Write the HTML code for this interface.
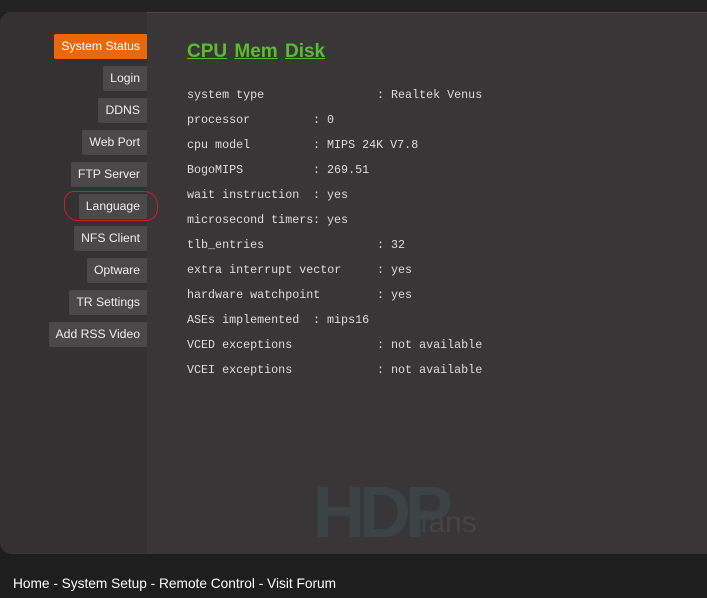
<!DOCTYPE html><html><head><style>
body{margin:0;width:707px;height:598px;overflow:hidden;background:#1f1e1e;font-family:"Liberation Sans",sans-serif;position:relative}
.top{position:absolute;left:0;top:0;width:707px;height:12px;background:#242323}
.panel{position:absolute;left:0;top:12px;width:707px;height:541px;background:#383636;border-radius:12px 0 0 12px;border-top:1px solid #4a4848}
.side{position:absolute;left:0;top:12px;width:147px;height:541px;background:#333131;border-radius:12px 0 0 12px}
.btn{position:absolute;right:560px;height:25px;line-height:25px;background:#4a4848;color:#eee;font-size:12.2px;padding:0 7px;border-radius:2px 0 0 2px;text-align:right}
.on{background:#e8690b;color:#fff}
.r{position:absolute;left:187px;color:#ddd;font:11.7px "Liberation Mono",monospace;white-space:pre}
.c{position:absolute;color:#ddd;font:11.7px "Liberation Mono",monospace;white-space:pre}
h1{position:absolute;left:187px;top:41px;margin:0;font-size:19px;font-weight:bold;color:#5dbb2f}
h1 span{text-decoration:underline;margin-right:2px}
.foot{position:absolute;left:13px;top:576px;color:#fff;font-size:13.7px}
.logo{position:absolute;left:313px;top:472px;font:bold 72px "Liberation Sans",sans-serif;color:#3b4345;letter-spacing:-6px}
.fans{position:absolute;left:420px;top:506px;font:30px "Liberation Sans",sans-serif;color:#444}
.oval{position:absolute;left:64px;top:191px;width:92px;height:28px;border:1.5px solid #c2232b;border-radius:10px 14px 12px 14px}
</style></head><body>
<div class="top"></div>
<div class="panel"></div>
<div class="side"></div>
<div class="logo">HDP</div><div class="fans">fans</div>
<div class="btn on" style="top:34px">System Status</div>
<div class="btn" style="top:66px">Login</div>
<div class="btn" style="top:98px">DDNS</div>
<div class="btn" style="top:130px">Web Port</div>
<div class="btn" style="top:162px">FTP Server</div>
<div class="btn" style="top:194px">Language</div>
<div class="btn" style="top:226px">NFS Client</div>
<div class="btn" style="top:258px">Optware</div>
<div class="btn" style="top:290px">TR Settings</div>
<div class="btn" style="top:322px">Add RSS Video</div>
<div class="oval"></div>
<h1><span>CPU</span> <span>Mem</span> <span>Disk</span></h1>
<div class="r" style="top:88px">system type</div><div class="c" style="left:377px;top:88px">: Realtek Venus</div>
<div class="r" style="top:113px">processor</div><div class="c" style="left:313px;top:113px">: 0</div>
<div class="r" style="top:138px">cpu model</div><div class="c" style="left:313px;top:138px">: MIPS 24K V7.8</div>
<div class="r" style="top:163px">BogoMIPS</div><div class="c" style="left:313px;top:163px">: 269.51</div>
<div class="r" style="top:188px">wait instruction</div><div class="c" style="left:313px;top:188px">: yes</div>
<div class="r" style="top:213px">microsecond timers</div><div class="c" style="left:313px;top:213px">: yes</div>
<div class="r" style="top:238px">tlb_entries</div><div class="c" style="left:377px;top:238px">: 32</div>
<div class="r" style="top:263px">extra interrupt vector</div><div class="c" style="left:377px;top:263px">: yes</div>
<div class="r" style="top:288px">hardware watchpoint</div><div class="c" style="left:377px;top:288px">: yes</div>
<div class="r" style="top:313px">ASEs implemented</div><div class="c" style="left:313px;top:313px">: mips16</div>
<div class="r" style="top:338px">VCED exceptions</div><div class="c" style="left:377px;top:338px">: not available</div>
<div class="r" style="top:363px">VCEI exceptions</div><div class="c" style="left:377px;top:363px">: not available</div>
<div class="foot">Home - System Setup - Remote Control - Visit Forum</div>
</body></html>
